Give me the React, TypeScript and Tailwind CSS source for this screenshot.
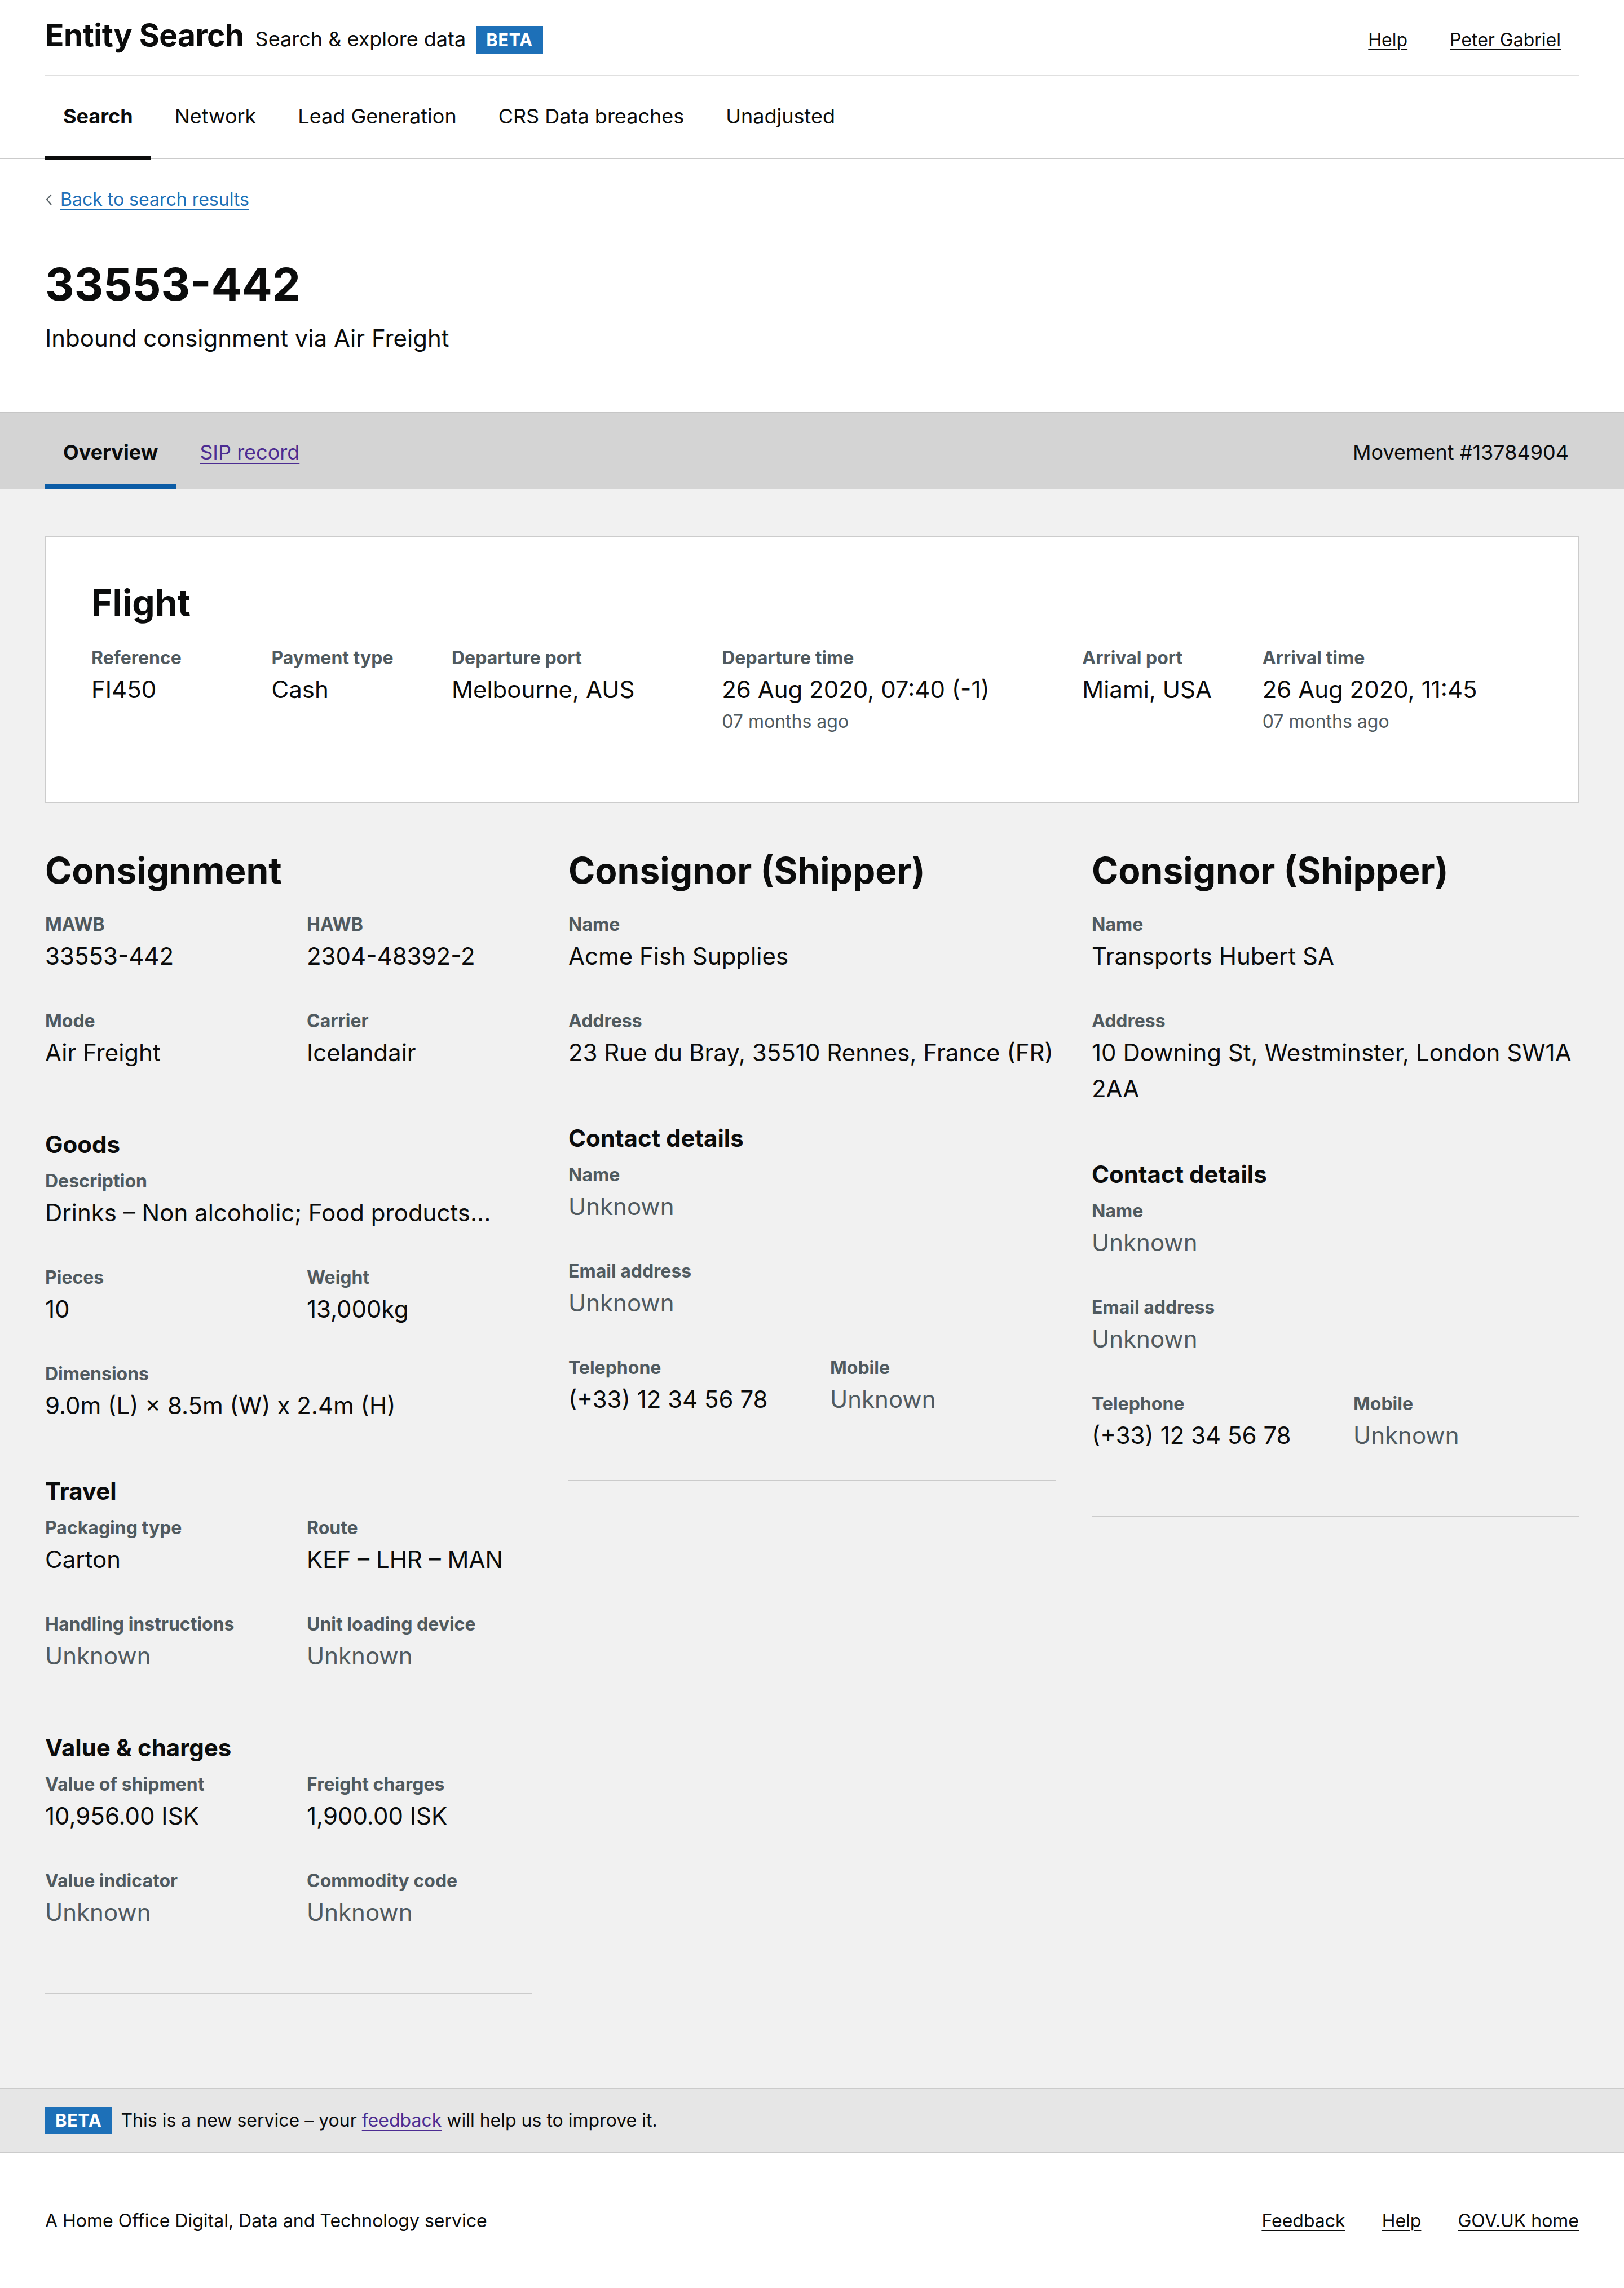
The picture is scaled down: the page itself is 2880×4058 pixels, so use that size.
import React from "react";

type FieldProps = {
  label: string;
  value: React.ReactNode;
  muted?: boolean;
  last?: boolean;
  nowrap?: boolean;
  className?: string;
};

function Field({ label, value, muted, last, nowrap, className }: FieldProps) {
  return (
    <div className={`${last ? "" : "mb-[63px]"} ${className ?? ""}`}>
      <div className="text-[32px] leading-[40px] font-bold text-[#505a5f]">{label}</div>
      <div
        className={`mt-[4px] text-[42px] leading-[64px] ${muted ? "text-[#505a5f]" : "text-[#0b0c0c]"} ${
          nowrap ? "whitespace-nowrap" : ""
        }`}
      >
        {value}
      </div>
    </div>
  );
}

function BetaTag() {
  return (
    <span className="inline-block bg-[#1d70b8] px-[18px] text-[31px] leading-[48px] font-bold text-white tracking-[0.5px]">
      BETA
    </span>
  );
}

function H2({ children }: { children: React.ReactNode }) {
  return <h2 className="text-[64px] leading-[77px] font-bold text-[#0b0c0c]">{children}</h2>;
}

function H3({ children, after }: { children: React.ReactNode; after: "grid" | "single" }) {
  return (
    <h3
      className={`${
        after === "grid" ? "mt-[43px]" : "mt-[32px]"
      } mb-[20px] text-[42px] leading-[50px] font-bold text-[#0b0c0c]`}
    >
      {children}
    </h3>
  );
}

function Grid2({ children }: { children: React.ReactNode }) {
  return <div className="grid grid-cols-2 gap-x-[64px]">{children}</div>;
}

export default function App() {
  const navItems = ["Search", "Network", "Lead Generation", "CRS Data breaches", "Unadjusted"];

  return (
    <div className="min-h-screen bg-white font-['Inter','Noto_Sans',sans-serif] text-[#0b0c0c]">
      {/* Header */}
      <header className="bg-white">
        <div className="px-[80px]">
          <div className="flex h-[135px] items-baseline justify-between border-b-2 border-[#e0e0e0] pt-[28px]">
            <div className="flex items-baseline">
              <span className="text-[55px] leading-[68px] font-bold tracking-[-0.5px]">Entity Search</span>
              <span className="ml-[20px] text-[36px] leading-[48px]">Search &amp; explore data</span>
              <span className="ml-[18px]">
                <BetaTag />
              </span>
            </div>
            <div className="flex items-baseline gap-[75px] pr-[32px] text-[32px]">
              <a className="underline underline-offset-[5px] decoration-2">Help</a>
              <a className="underline underline-offset-[5px] decoration-2">Peter Gabriel</a>
            </div>
          </div>
        </div>
        <nav className="border-b-2 border-[#cbcbcb]">
          <div className="-mb-[4px] flex h-[149px] gap-[10px] px-[80px]">
            {navItems.map((item, i) => (
              <a
                key={item}
                className={`flex items-center border-b-[8px] px-[32px] text-[36px] ${
                  i === 0 ? "border-[#0b0c0c] font-bold" : "border-transparent"
                }`}
              >
                {item}
              </a>
            ))}
          </div>
        </nav>
      </header>

      {/* Page heading */}
      <section className="bg-white px-[80px] pb-[102px]">
        <div className="mt-[52px] flex items-center gap-[13px] text-[32px] leading-[40px]">
          <svg width="14" height="22" viewBox="0 0 14 22" fill="none">
            <polyline points="11,2 3,11 11,20" stroke="#505a5f" strokeWidth="2" />
          </svg>
          <a className="text-[#1d70b8] underline underline-offset-[5px] decoration-2">Back to search results</a>
        </div>
        <h1 className="mt-[82px] text-[80px] leading-[96px] font-bold">33553-442</h1>
        <p className="mt-[20px] text-[42px] leading-[56px]">Inbound consignment via Air Freight</p>
      </section>

      {/* Sub tabs */}
      <div className="border-t-2 border-[#c6c6c6] bg-[#d4d4d4]">
        <div className="flex h-[136px] items-stretch justify-between px-[80px]">
          <div className="flex gap-[10px]">
            <a className="flex items-center border-b-[10px] border-[#0b5ca6] px-[32px] pt-[14px] text-[36px] font-bold">
              Overview
            </a>
            <a className="flex items-center border-b-[10px] border-transparent px-[32px] pt-[14px] text-[36px] text-[#4c2c92] underline underline-offset-[6px] decoration-2">
              SIP record
            </a>
          </div>
          <div className="flex items-center pb-[10px] pr-[18px] pt-[14px] text-[36px]">Movement #13784904</div>
        </div>
      </div>

      {/* Main */}
      <main className="bg-[#f1f1f1] px-[80px] pb-[166px] pt-[82px]">
        {/* Flight card */}
        <div className="border-2 border-[#cccccc] bg-white px-[80px] pb-[121px] pt-[78px]">
          <H2>Flight</H2>
          <div className="mt-[40px] grid grid-cols-[repeat(16,minmax(0,1fr))]">
            <Field className="col-span-2" last label="Reference" value="FI450" />
            <Field className="col-span-2" last label="Payment type" value="Cash" />
            <Field className="col-span-3" last label="Departure port" value="Melbourne, AUS" />
            <div className="col-span-4">
              <Field last label="Departure time" value="26 Aug 2020, 07:40 (-1)" />
              <div className="mt-[3px] text-[32px] leading-[44px] text-[#505a5f]">07 months ago</div>
            </div>
            <Field className="col-span-2" last label="Arrival port" value="Miami, USA" />
            <div className="col-span-3">
              <Field last label="Arrival time" value="26 Aug 2020, 11:45" />
              <div className="mt-[3px] text-[32px] leading-[44px] text-[#505a5f]">07 months ago</div>
            </div>
          </div>
        </div>

        {/* Columns */}
        <div className="mt-[80px] grid grid-cols-3 gap-x-[64px]">
          {/* Consignment */}
          <div className="flex flex-col">
            <H2>Consignment</H2>
            <div className="mt-[38px] flex flex-col">
              <Grid2>
                <Field label="MAWB" value="33553-442" />
                <Field label="HAWB" value="2304-48392-2" />
                <Field label="Mode" value="Air Freight" />
                <Field label="Carrier" value="Icelandair" />
              </Grid2>
              <H3 after="grid">Goods</H3>
              <Field label="Description" value="Drinks – Non alcoholic; Food products..." />
              <Grid2>
                <Field label="Pieces" value="10" />
                <Field label="Weight" value="13,000kg" />
              </Grid2>
              <Field label="Dimensions" value="9.0m (L) × 8.5m (W) x 2.4m (H)" />
              <H3 after="single">Travel</H3>
              <Grid2>
                <Field label="Packaging type" value="Carton" />
                <Field label="Route" value="KEF – LHR – MAN" />
                <Field label="Handling instructions" value="Unknown" muted />
                <Field label="Unit loading device" value="Unknown" muted />
              </Grid2>
              <H3 after="grid">Value &amp; charges</H3>
              <Grid2>
                <Field label="Value of shipment" value="10,956.00 ISK" />
                <Field label="Freight charges" value="1,900.00 ISK" />
                <Field label="Value indicator" value="Unknown" muted />
                <Field label="Commodity code" value="Unknown" muted />
              </Grid2>
              <hr className="mt-[48px] border-0 border-t-2 border-[#cbcbcb]" />
            </div>
          </div>

          {/* Consignor 1 */}
          <div className="flex flex-col">
            <H2>Consignor (Shipper)</H2>
            <div className="mt-[38px] flex flex-col">
              <Field label="Name" value="Acme Fish Supplies" />
              <Field label="Address" nowrap value="23 Rue du Bray, 35510 Rennes, France (FR)" />
              <H3 after="single">Contact details</H3>
              <Field label="Name" value="Unknown" muted />
              <Field label="Email address" value="Unknown" muted />
              <Grid2>
                <Field label="Telephone" value="(+33) 12 34 56 78" />
                <Field label="Mobile" value="Unknown" muted />
              </Grid2>
              <hr className="mt-[48px] border-0 border-t-2 border-[#cbcbcb]" />
            </div>
          </div>

          {/* Consignor 2 */}
          <div className="flex flex-col">
            <H2>Consignor (Shipper)</H2>
            <div className="mt-[38px] flex flex-col">
              <Field label="Name" value="Transports Hubert SA" />
              <Field label="Address" value="10 Downing St, Westminster, London SW1A 2AA" />
              <H3 after="single">Contact details</H3>
              <Field label="Name" value="Unknown" muted />
              <Field label="Email address" value="Unknown" muted />
              <Grid2>
                <Field label="Telephone" value="(+33) 12 34 56 78" />
                <Field label="Mobile" value="Unknown" muted />
              </Grid2>
              <hr className="mt-[48px] border-0 border-t-2 border-[#cbcbcb]" />
            </div>
          </div>
        </div>
      </main>

      {/* Beta banner */}
      <div className="border-y-2 border-[#cbcbcb] bg-[#e6e6e6]">
        <div className="flex h-[112px] items-center gap-[16px] px-[80px] text-[32px]">
          <BetaTag />
          <span>
            This is a new service – your{" "}
            <a className="text-[#4c2c92] underline underline-offset-[5px] decoration-2">feedback</a> will help us to
            improve it.
          </span>
        </div>
      </div>

      {/* Footer */}
      <footer className="flex h-[240px] items-center justify-between bg-white px-[80px] text-[32px]">
        <span>A Home Office Digital, Data and Technology service</span>
        <div className="flex gap-[65px]">
          <a className="underline underline-offset-[5px] decoration-2">Feedback</a>
          <a className="underline underline-offset-[5px] decoration-2">Help</a>
          <a className="underline underline-offset-[5px] decoration-2">GOV.UK home</a>
        </div>
      </footer>
    </div>
  );
}
